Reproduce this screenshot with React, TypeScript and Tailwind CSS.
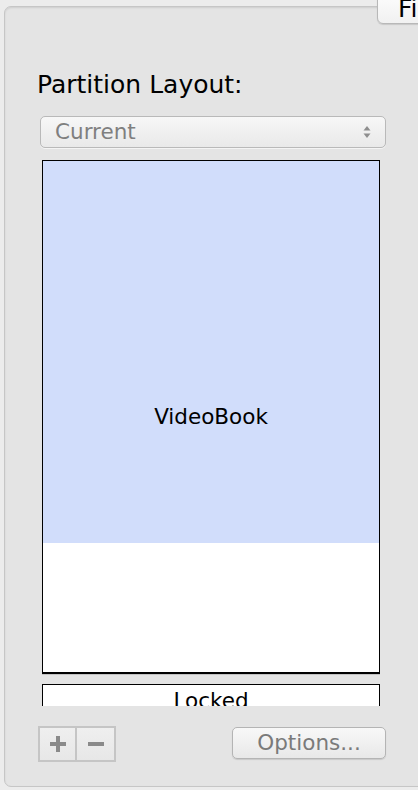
import React from 'react'

const font = "font-['DejaVu_Sans','Liberation_Sans',sans-serif]"

function PopupArrows() {
  return (
    <svg width="8" height="16" viewBox="0 0 8 16" className="shrink-0">
      <path d="M4 2 L7.5 6.5 L0.5 6.5 Z" fill="#8e8e8e" />
      <path d="M4 14 L7.5 9.5 L0.5 9.5 Z" fill="#8e8e8e" />
    </svg>
  )
}

export default function App() {
  return (
    <div className={`relative w-[418px] h-[790px] overflow-hidden bg-[#ececec] ${font}`}>
      {/* tab peeking in from the right */}
      <div className="absolute left-[377px] top-[-8px] w-[120px] h-[32px] rounded-[6px] border border-[#b8b8b8] bg-gradient-to-b from-[#fdfdfd] to-[#f1f1f1] shadow-[0_1px_1px_rgba(0,0,0,0.12)] pl-[20px] pt-[1px] text-[25px] leading-[30px] text-black whitespace-nowrap z-10">
        First Aid
      </div>

      {/* tab view body */}
      <div className="ml-[4px] mt-[6px] w-[440px] h-[781px] rounded-[7px] border border-[#c6c6c6] bg-[#e4e4e4] shadow-[inset_0_1px_2px_rgba(0,0,0,0.10)] pl-[32px] pt-[63px]">
        <div className="w-[350px] flex flex-col">
          <div className="h-[30px] text-[25px] leading-[30px] text-black">Partition Layout:</div>

          {/* popup */}
          <div className="mt-[16px] ml-[3px] w-[346px] h-[32px] rounded-[5px] border border-[#b9b9b9] bg-gradient-to-b from-[#f7f7f7] to-[#e9e9e9] shadow-[0_1px_0_rgba(255,255,255,0.6)] flex items-center pl-[14px] pr-[14px]">
            <span className="flex-1 text-[21.5px] leading-[26px] text-[#7f7f7f]">Current</span>
            <PopupArrows />
          </div>

          {/* partition map */}
          <div className="mt-[12px] ml-[5px] w-[338px] h-[546px] overflow-hidden">
            <div className="h-[514px] border border-black border-b-2 bg-white grid shadow-[0_1px_0_rgba(0,0,0,0.15)]">
              <div className="[grid-area:1/1] flex flex-col">
                <div className="h-[382px] bg-[#d1ddfb]" />
                <div className="flex-1 bg-white" />
              </div>
              <div className="[grid-area:1/1] flex items-center justify-center">
                <span className="text-[21.5px] leading-[26px] text-black">VideoBook</span>
              </div>
            </div>
            <div className="mt-[10px] h-[60px] border border-black bg-white flex justify-center pt-[3px]">
              <span className="text-[21.5px] leading-[26px] text-black">Locked</span>
            </div>
          </div>

          {/* bottom controls */}
          <div className="mt-[20px] flex items-start">
            <div className="ml-[1px] flex h-[36px] border-2 border-[#c5c5c5] bg-gradient-to-b from-[#efefef] to-[#e7e7e7]">
              <div className="w-[37px] flex items-center justify-center border-r-2 border-[#c5c5c5]">
                <svg width="16" height="16" viewBox="0 0 16 16">
                  <rect x="6" y="0" width="4" height="16" fill="#8a8a8a" />
                  <rect x="0" y="6" width="16" height="4" fill="#8a8a8a" />
                </svg>
              </div>
              <div className="w-[37px] flex items-center justify-center">
                <svg width="16" height="4" viewBox="0 0 16 4">
                  <rect x="0" y="0" width="16" height="4" fill="#8a8a8a" />
                </svg>
              </div>
            </div>
            <div className="ml-auto mr-[1px] w-[154px] h-[32px] mt-[1px] rounded-[5px] border border-[#b4b4b4] bg-gradient-to-b from-[#f8f8f8] to-[#e8e8e8] shadow-[0_1px_1px_rgba(0,0,0,0.12)] flex items-center justify-center text-[21.5px] leading-[26px] text-[#7a7a7a]">
              Options...
            </div>
          </div>
        </div>
      </div>
    </div>
  )
}
